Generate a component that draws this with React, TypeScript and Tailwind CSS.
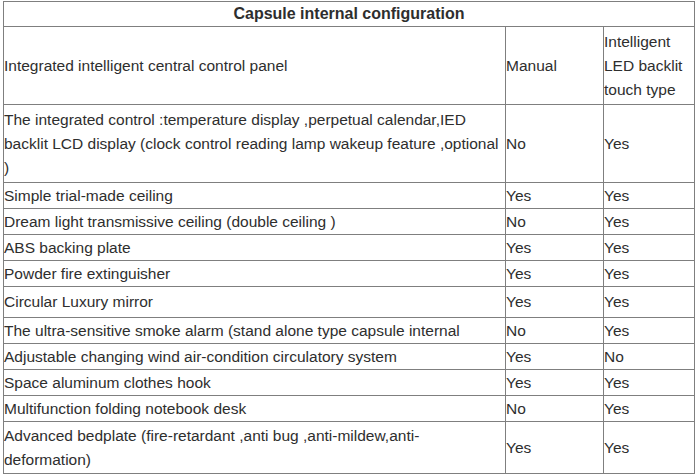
const rows: { label: React.ReactNode; manual: string; led: string; h: string }[] = [
  {
    label: (
      <>
        The integrated control :temperature display ,perpetual calendar,IED
        <br />
        backlit LCD display (clock control reading lamp wakeup feature ,optional
        <br />)
      </>
    ),
    manual: 'No',
    led: 'Yes',
    h: 'h-[78px]',
  },
  { label: 'Simple trial-made ceiling', manual: 'Yes', led: 'Yes', h: 'h-[26px]' },
  { label: 'Dream light transmissive ceiling (double ceiling )', manual: 'No', led: 'Yes', h: 'h-[26px]' },
  { label: 'ABS backing plate', manual: 'Yes', led: 'Yes', h: 'h-[26px]' },
  { label: 'Powder fire extinguisher', manual: 'Yes', led: 'Yes', h: 'h-[26px]' },
  { label: 'Circular Luxury mirror', manual: 'Yes', led: 'Yes', h: 'h-[31px]' },
  { label: 'The ultra-sensitive smoke alarm (stand alone type capsule internal', manual: 'No', led: 'Yes', h: 'h-[26px]' },
  { label: 'Adjustable changing wind air-condition circulatory system', manual: 'Yes', led: 'No', h: 'h-[26px]' },
  { label: 'Space aluminum clothes hook', manual: 'Yes', led: 'Yes', h: 'h-[26px]' },
  { label: 'Multifunction folding notebook desk', manual: 'No', led: 'Yes', h: 'h-[26px]' },
  {
    label: (
      <>
        Advanced bedplate (fire-retardant ,anti bug ,anti-mildew,anti-
        <br />
        deformation)
      </>
    ),
    manual: 'Yes',
    led: 'Yes',
    h: 'h-[52px]',
  },
]

const cell = 'flex items-center border-r border-b border-[#7f7f7f] whitespace-nowrap overflow-hidden'

export default function App() {
  return (
    <div className="min-h-[475px] bg-white pt-px pl-[3px] font-['Liberation_Sans',Arial,sans-serif] text-[15.5px] leading-[24px] text-[#2e2e2e]">
      <div className="grid w-[692px] grid-cols-[502px_98px_91px] border-l border-t border-[#7f7f7f]">
        <div className={`${cell} col-span-3 h-[25px] justify-center text-[16px] font-bold`}>
          Capsule internal configuration
        </div>

        <div className={`${cell} h-[78px]`}>Integrated intelligent central control panel</div>
        <div className={`${cell} h-[78px]`}>Manual</div>
        <div className={`${cell} h-[78px]`}>
          <div>
            Intelligent
            <br />
            LED backlit
            <br />
            touch type
          </div>
        </div>

        {rows.map((r, i) => (
          <div key={i} className="contents">
            <div className={`${cell} ${r.h}`}>
              <div>{r.label}</div>
            </div>
            <div className={`${cell} ${r.h}`}>{r.manual}</div>
            <div className={`${cell} ${r.h}`}>{r.led}</div>
          </div>
        ))}
      </div>
    </div>
  )
}
